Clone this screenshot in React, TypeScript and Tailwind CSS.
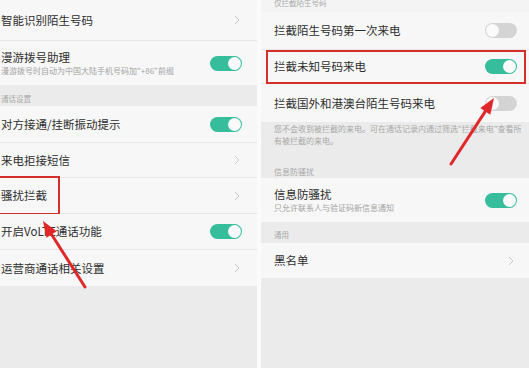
import * as React from "react";

const GREEN = "bg-[#35bd9c]";

type ToggleProps = { on: boolean };

const Toggle = ({ on }: ToggleProps) => (
  <div
    className={`flex h-[15px] w-[32px] shrink-0 items-center rounded-full px-[1px] ${
      on ? `${GREEN} justify-end` : "justify-start bg-[#d4d4d4]"
    }`}
  >
    <div className="h-[13px] w-[13px] rounded-full bg-[#fafafa]" />
  </div>
);

const Chevron = () => (
  <svg width="6" height="10" viewBox="0 0 6 10" className="shrink-0">
    <polyline points="1,1 5,5 1,9" fill="none" stroke="#c9c9c9" strokeWidth="1" />
  </svg>
);

type RowProps = {
  title: string;
  sub?: string;
  right?: React.ReactNode;
  h: string;
  border?: boolean;
  pl: string;
  pr: string;
  children?: React.ReactNode;
};

const Row = ({ title, sub, right, h, border = true, pl, pr, children }: RowProps) => (
  <div
    className={`relative flex ${h} items-center justify-between bg-[#f7f7f7] ${pl} ${pr} ${
      border ? "border-b border-[#e6e6e6]" : ""
    }`}
  >
    <div className="flex flex-col">
      <span className="text-[11.5px] leading-[15px] text-[#2e2e2e]">{title}</span>
      {sub && <span className="mt-[1px] text-[8px] leading-[10px] text-[#a3a3a3]">{sub}</span>}
    </div>
    {right}
    {children}
  </div>
);

export default function App() {
  return (
    <div className="relative flex h-[368px] w-[529px] overflow-hidden bg-[#fbfbfb] font-['Noto_Sans_CJK_SC','Noto_Sans',sans-serif]">
      {/* left screen */}
      <div className="flex w-[257px] flex-col bg-[#ebebeb]">
        <Row title="智能识别陌生号码" h="h-[41px]" pl="pl-[1px]" pr="pr-[17px]" right={<Chevron />} />
        <Row
          title="漫游拨号助理"
          sub={'漫游拨号时自动为中国大陆手机号码加"+86"前缀'}
          h="h-[44px]"
          pl="pl-[1px]"
          pr="pr-[15px]"
          border={false}
          right={<Toggle on />}
        />
        <div className="flex h-[21px] items-end pb-[3px] pl-[1px] text-[7.5px] leading-[9px] text-[#a8a8a8]">
          通话设置
        </div>
        <Row title="对方接通/挂断振动提示" h="h-[37px]" pl="pl-[1px]" pr="pr-[15px]" right={<Toggle on />} />
        <Row title="来电拒接短信" h="h-[35px]" pl="pl-[1px]" pr="pr-[17px]" right={<Chevron />} />
        <Row title="骚扰拦截" h="h-[36px]" pl="pl-[1px]" pr="pr-[17px]" right={<Chevron />}>
          <div className="absolute left-[-3px] top-[-2px] h-[39px] w-[63px] border-2 border-[#d42f2b]" />
        </Row>
        <Row title="开启VoLTE通话功能" h="h-[36px]" pl="pl-[1px]" pr="pr-[15px]" right={<Toggle on />} />
        <Row title="运营商通话相关设置" h="h-[36px]" pl="pl-[1px]" pr="pr-[17px]" border={false} right={<Chevron />} />
      </div>

      <div className="w-[4px]" />

      {/* right screen */}
      <div className="flex flex-1 flex-col bg-[#ebebeb]">
        <div className="flex h-[12px] items-start bg-[#f4f4f4] pl-[13px] text-[7.5px] leading-[6px] text-[#a8a8a8]">
          仅拦截陌生号码
        </div>
        <Row title="拦截陌生号码第一次来电" h="h-[38px]" pl="pl-[13px]" pr="pr-[12px]" right={<Toggle on={false} />} />
        <Row title="拦截未知号码来电" h="h-[34px]" pl="pl-[13px]" pr="pr-[12px]" right={<Toggle on />}>
          <div className="absolute bottom-[-1px] left-[5px] right-[3px] top-[0px] border-2 border-[#d42f2b]" />
        </Row>
        <Row
          title="拦截国外和港澳台陌生号码来电"
          h="h-[38px]"
          pl="pl-[13px]"
          pr="pr-[12px]"
          border={false}
          right={<Toggle on={false} />}
        />
        <div className="flex h-[56px] flex-col justify-between pb-[2px] pl-[13px] pr-[4px] pt-[1px] text-[8px] leading-[12px] text-[#a8a8a8]">
          <p>您不会收到被拦截的来电。可在通话记录内通过筛选"拦截来电"查看所有被拦截的来电。</p>
          <p className="leading-[9px]">信息防骚扰</p>
        </div>
        <Row
          title="信息防骚扰"
          sub="只允许联系人与验证码新信息通知"
          h="h-[44px]"
          pl="pl-[13px]"
          pr="pr-[12px]"
          border={false}
          right={<Toggle on />}
        />
        <div className="flex h-[21px] items-end pb-[4px] pl-[13px] text-[7.5px] leading-[9px] text-[#a8a8a8]">
          通用
        </div>
        <Row title="黑名单" h="h-[35px]" pl="pl-[13px]" pr="pr-[15px]" border={false} right={<Chevron />} />
      </div>

      {/* annotation arrows */}
      <svg className="pointer-events-none absolute inset-0" width="529" height="368" viewBox="0 0 529 368">
        <line x1="85" y1="287" x2="51.6" y2="234.5" stroke="#e0282a" strokeWidth="3" strokeLinecap="round" />
        <polygon points="43,221 56.7,231.3 46.5,237.7" fill="#e0282a" />
        <line x1="451" y1="164" x2="485.3" y2="111.4" stroke="#e0282a" strokeWidth="3" strokeLinecap="round" />
        <polygon points="494,98 490.3,114.7 480.3,108.1" fill="#e0282a" />
      </svg>
    </div>
  );
}
